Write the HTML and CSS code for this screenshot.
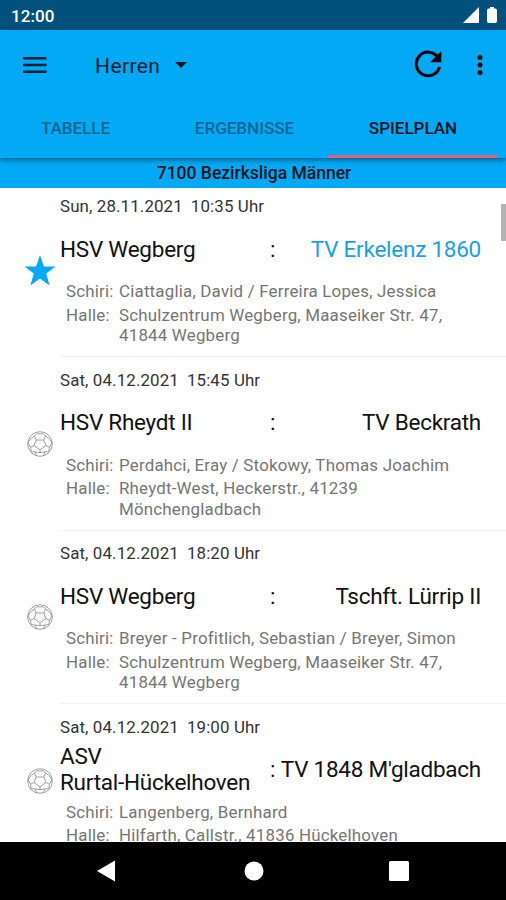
FILE: index.html
```html
<!DOCTYPE html>
<html lang="de">
<head>
<meta charset="utf-8">
<title>Spielplan</title>
<link rel="stylesheet" href="styles.css">
</head>
<body>
<svg class="defs" width="0" height="0">
  <symbol id="ball" viewBox="0 0 26 26">
    <g fill="none" stroke="#888" stroke-width=".8">
      <circle cx="13" cy="13" r="12.300"/>
      <path d="M9.200 9h7.600l2.200 5.500-6 4.200-6-4.200zM9.200 9 7.500 4.800M16.800 9l1.700-4.200M19 14.500l3.500 1.700M7 14.500l-3.500 1.700M13 18.700v3M7.500 4.800 9.500 2.800h7l2 2M7.500 4.800 3.300 8.300 1 11.500M18.500 4.800l4.200 3.500 2.300 3.200M1 11.500l2.500 4.700.7 4.300M25 11.500l-2.500 4.700-.7 4.300M4.200 20.500 8.300 21l1.200 4M21.800 20.500l-4.100.5-1.200 4M8.300 21l4.700.7 4.700-.7"/>
    </g>
  </symbol>
</svg>
<div class="screen">
  <div class="status">
    <span class="clock">12:00</span>
    <svg width="36" height="18" viewBox="0 0 36 18"><path fill="#fff" d="M1 17 17 1v16zM25 4.200q0-1.700 1.700-1.700h1.300V1h4v1.500h1.300Q35 2.500 35 4.200V15.300Q35 17 33.300 17H26.700Q25 17 25 15.300z"/></svg>
  </div>
  <header class="appbar">
    <div class="toolbar">
      <svg class="menu" width="24" height="18" viewBox="0 0 24 18"><path d="M0 2.200h23.500M0 9h23.500M0 15.800h23.500" stroke="#04202e" stroke-width="2.500"/></svg>
      <div class="select">Herren<i class="caret"></i></div>
      <svg class="refresh" width="28" height="28" viewBox="0 0 28 28"><path d="M24 7.500A11.800 11.800 0 1 0 25.500 17" fill="none" stroke="#000" stroke-width="3"/><path d="M27.300 1v11.300H16z"/></svg>
      <svg class="more" width="6" height="22" viewBox="0 0 6 22"><circle cx="3" cy="3.400" r="2.500"/><circle cx="3" cy="11" r="2.500"/><circle cx="3" cy="18.600" r="2.500"/></svg>
    </div>
    <nav class="tabs">
      <span class="tab">TABELLE</span>
      <span class="tab">ERGEBNISSE</span>
      <span class="tab active">SPIELPLAN</span>
    </nav>
  </header>
  <div class="league"><span>7100 Bezirksliga Männer</span></div>
  <main class="list">
    <i class="scrollbar"></i>
    <article class="match">
      <div class="mark"><svg width="32" height="31" viewBox="0 0 32 31"><path fill="#03a9f4" d="m16 0 3.900 11.500H31.600L22.200 18.600 25.600 30.400 16 23.400 6.400 30.400 9.800 18.600.4 11.500h11.700z"/></svg></div>
      <div class="body">
        <div class="date"><span>Sun, 28.11.2021</span><span>10:35 Uhr</span></div>
        <div class="teams"><span class="home">HSV Wegberg</span><span class="colon">:</span><span class="guest own">TV Erkelenz 1860</span></div>
        <dl><dt>Schiri:</dt><dd>Ciattaglia, David / Ferreira Lopes, Jessica</dd><dt>Halle:</dt><dd>Schulzentrum Wegberg, Maaseiker Str. 47,<br>41844 Wegberg</dd></dl>
      </div>
    </article>
    <article class="match">
      <div class="mark"><svg width="26" height="26"><use href="#ball"/></svg></div>
      <div class="body">
        <div class="date"><span>Sat, 04.12.2021</span><span>15:45 Uhr</span></div>
        <div class="teams"><span class="home">HSV Rheydt II</span><span class="colon">:</span><span class="guest">TV Beckrath</span></div>
        <dl><dt>Schiri:</dt><dd>Perdahci, Eray / Stokowy, Thomas Joachim</dd><dt>Halle:</dt><dd>Rheydt-West, Heckerstr., 41239<br>Mönchengladbach</dd></dl>
      </div>
    </article>
    <article class="match">
      <div class="mark"><svg width="26" height="26"><use href="#ball"/></svg></div>
      <div class="body">
        <div class="date"><span>Sat, 04.12.2021</span><span>18:20 Uhr</span></div>
        <div class="teams"><span class="home">HSV Wegberg</span><span class="colon">:</span><span class="guest">Tschft. Lürrip II</span></div>
        <dl><dt>Schiri:</dt><dd>Breyer - Profitlich, Sebastian / Breyer, Simon</dd><dt>Halle:</dt><dd>Schulzentrum Wegberg, Maaseiker Str. 47,<br>41844 Wegberg</dd></dl>
      </div>
    </article>
    <article class="match">
      <div class="mark"><svg width="26" height="26"><use href="#ball"/></svg></div>
      <div class="body">
        <div class="date"><span>Sat, 04.12.2021</span><span>19:00 Uhr</span></div>
        <div class="teams"><span class="home">ASV<br>Rurtal-Hückelhoven</span><span class="colon">:</span><span class="guest">TV 1848 M'gladbach</span></div>
        <dl><dt>Schiri:</dt><dd>Langenberg, Bernhard</dd><dt>Halle:</dt><dd>Hilfarth, Callstr., 41836 Hückelhoven</dd></dl>
      </div>
    </article>
  </main>
  <footer class="navbar">
    <svg width="18" height="22" viewBox="0 0 18 22"><path fill="#fff" d="M0 11 18 .5v21z"/></svg>
    <svg width="20" height="20" viewBox="0 0 20 20"><circle cx="10" cy="10" r="9.500" fill="#fff"/></svg>
    <svg width="20" height="20" viewBox="0 0 20 20"><rect width="20" height="20" rx="1.500" fill="#fff"/></svg>
  </footer>
</div>
</body>
</html>
```
FILE: styles.css
```css
* { box-sizing: border-box; }
body { margin: 0; font-family: Roboto, "Liberation Sans", sans-serif; color: #111; background: #fff; }
svg { display: block; flex: none; }
.defs { position: absolute; }
.screen { width: 506px; height: 900px; display: flex; flex-direction: column; overflow: hidden; }

.status { height: 30px; flex: none; background: #01517c; display: flex; align-items: center; justify-content: space-between; padding: 2px 8px 0 11px; }
.status svg { margin-top: -2px; }
.clock { color: #fff; font-size: 17px; font-weight: 500; letter-spacing: .1px; }

.appbar { height: 128px; flex: none; background: #03a9f4; box-shadow: 0 2px 5px rgba(0, 0, 0, .45); position: relative; z-index: 3; }
.toolbar { height: 70px; display: flex; align-items: center; padding-left: 23px; }
.select { display: flex; align-items: center; margin: 1px 0 0 48px; font-size: 21px; letter-spacing: .4px; color: #04202e; }
.caret { border: 6px solid transparent; border-top: 6px solid #04141c; border-bottom: 0; margin-left: 15px; margin-top: -2px; }
.refresh { margin-left: auto; margin-right: 35px; margin-top: -2px; }
.more { margin-right: 23px; margin-top: -1px; }
.tabs { height: 58px; display: grid; grid-template-columns: 169px 169px 170px; margin-left: -10px; }
.tab { display: flex; align-items: center; justify-content: center; font-size: 17px; font-weight: 500; color: #046690; border-bottom: 3px solid transparent; padding: 1px 0 0 2px; }
.tab.active { color: #04141c; border-color: #e0637d; padding-left: 0; }

.league { height: 30px; flex: none; background: #03a9f4; position: relative; z-index: 2; display: flex; align-items: center; justify-content: center; font-size: 17.500px; font-weight: 500; color: #04141c; padding-left: 2px; }

.list { flex: 1; min-height: 0; overflow: hidden; position: relative; margin-top: -4px; }
.scrollbar { position: absolute; right: 0; top: 20px; width: 5px; height: 37px; background: #b3b3b3; }
.match { display: flex; align-items: stretch; }
.mark { width: 60px; flex: none; display: flex; align-items: center; padding-left: 27px; }
.scrollbar + .match .mark { padding-left: 24px; }
.body { flex: 1; min-width: 0; padding: 12.400px 0 10.500px; border-bottom: 1px solid #f0f0f0; }
.date { display: flex; gap: 8px; height: 20px; line-height: 20px; font-size: 16.900px; letter-spacing: .12px; color: #333; }
.teams { height: 52px; margin: 6.500px 25px 6.500px 0; display: grid; grid-template-columns: 210px 8px 1fr; align-items: center; font-size: 22.500px; line-height: 26px; letter-spacing: -.25px; }
.colon { text-align: left; }
.guest { text-align: right; white-space: nowrap; }
.own { color: #1a9fe6; }
dl { margin: 0 0 0 6px; display: grid; grid-template-columns: 53px 1fr; row-gap: 3px; font-size: 16.900px; line-height: 20.500px; letter-spacing: .2px; color: #757575; }
dd { margin: 0; white-space: nowrap; }

.navbar { height: 58px; flex: none; background: #000; display: flex; align-items: center; padding-left: 97px; position: relative; z-index: 2; }
.navbar svg + svg { margin-left: 129px; }
.navbar svg + svg + svg { margin-left: 125px; }
```
